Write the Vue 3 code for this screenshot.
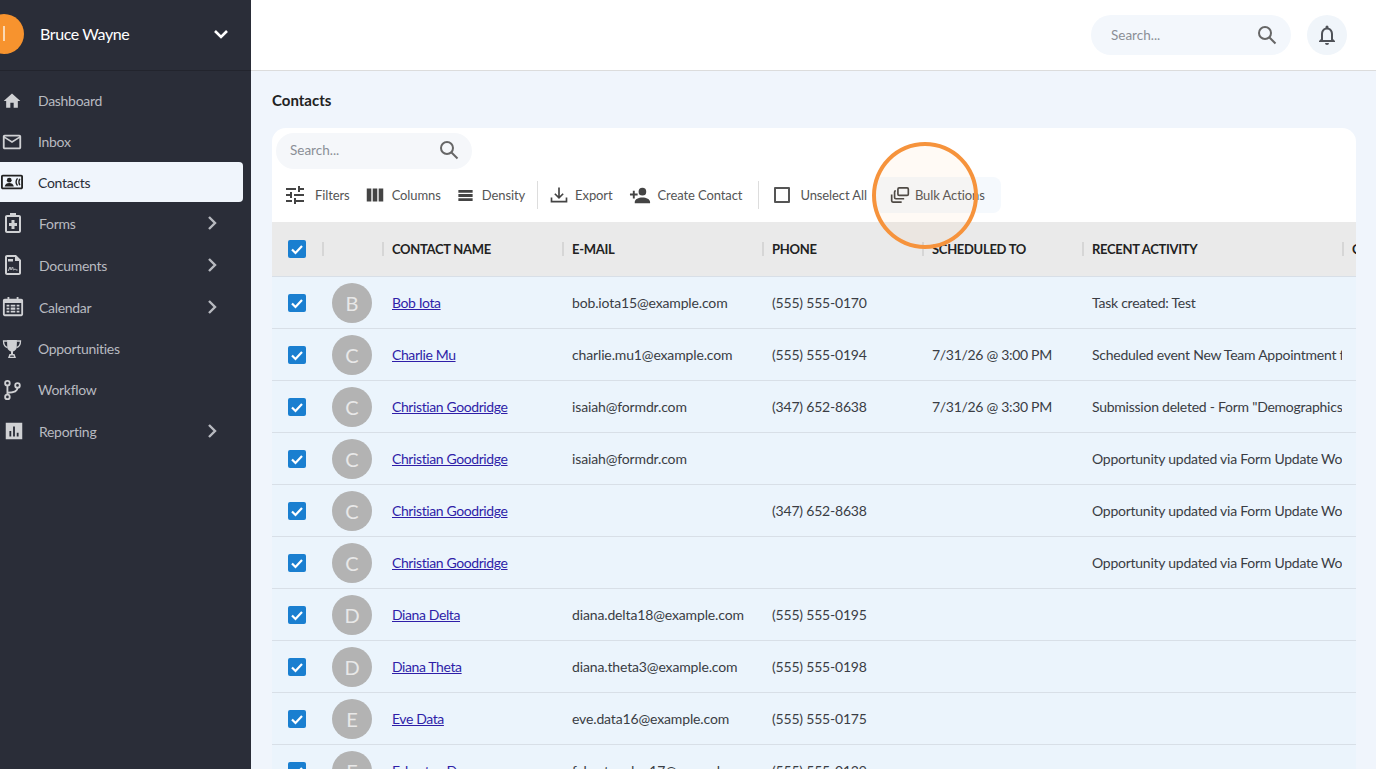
<script setup>
const menu = [
  { label: 'Dashboard', icon: 'home' },
  { label: 'Inbox', icon: 'mail' },
  { label: 'Contacts', icon: 'contacts', active: true },
  { label: 'Forms', icon: 'forms', sub: true },
  { label: 'Documents', icon: 'docs', sub: true },
  { label: 'Calendar', icon: 'calendar', sub: true },
  { label: 'Opportunities', icon: 'trophy' },
  { label: 'Workflow', icon: 'flow' },
  { label: 'Reporting', icon: 'chart', sub: true },
];

const contacts = [
  { name: 'Bob Iota', email: 'bob.iota15@example.com', phone: '(555) 555-0170', when: '', activity: 'Task created: Test' },
  { name: 'Charlie Mu', email: 'charlie.mu1@example.com', phone: '(555) 555-0194', when: '7/31/26 @ 3:00 PM', activity: 'Scheduled event New Team Appointment for Charlie' },
  { name: 'Christian Goodridge', email: 'isaiah@formdr.com', phone: '(347) 652-8638', when: '7/31/26 @ 3:30 PM', activity: 'Submission deleted - Form "Demographics" removed' },
  { name: 'Christian Goodridge', email: 'isaiah@formdr.com', phone: '', when: '', activity: 'Opportunity updated via Form Update Workflow' },
  { name: 'Christian Goodridge', email: '', phone: '(347) 652-8638', when: '', activity: 'Opportunity updated via Form Update Workflow' },
  { name: 'Christian Goodridge', email: '', phone: '', when: '', activity: 'Opportunity updated via Form Update Workflow' },
  { name: 'Diana Delta', email: 'diana.delta18@example.com', phone: '(555) 555-0195', when: '', activity: '' },
  { name: 'Diana Theta', email: 'diana.theta3@example.com', phone: '(555) 555-0198', when: '', activity: '' },
  { name: 'Eve Data', email: 'eve.data16@example.com', phone: '(555) 555-0175', when: '', activity: '' },
  { name: 'Fabastan Doe', email: 'fabastan.doe17@example.com', phone: '(555) 555-0139', when: '', activity: '' },
];

const columns = ['Contact Name', 'E-mail', 'Phone', 'Scheduled To', 'Recent Activity', 'Created'];
</script>

<template>
  <div class="page">
    <aside class="sidebar">
      <div class="user">
        <span class="avatar-main"><i></i></span>
        <span class="user-name">Bruce Wayne</span>
        <svg class="user-caret" viewBox="0 0 24 24" width="24" height="24"><path d="M6 9l6 6 6-6" fill="none" stroke="#fff" stroke-width="2.6" /></svg>
      </div>
      <nav class="menu">
        <a v-for="m in menu" :key="m.label" class="item" :class="{ active: m.active, sub: m.sub }">
          <span class="item-icon">
            <svg v-if="m.icon === 'home'" viewBox="0 0 24 24" width="20" height="20"><path d="M10 20v-6h4v6h5v-8h3L12 3 2 12h3v8z" fill="currentColor" /></svg>
            <svg v-else-if="m.icon === 'mail'" viewBox="0 0 24 24" width="22" height="22"><path d="M22 6c0-1.100-.9-2-2-2H4c-1.100 0-2 .9-2 2v12c0 1.100.9 2 2 2h16c1.100 0 2-.9 2-2V6zm-2 0l-8 5-8-5h16zm0 12H4V8l8 5 8-5v10z" fill="currentColor" /></svg>
            <svg v-else-if="m.icon === 'contacts'" viewBox="0 0 24 24" width="22" height="22"><path d="M22 4H2C.9 4 0 4.900 0 6v12c0 1.100.9 2 2 2h20c1.100 0 2-.9 2-2V6c0-1.100-.9-2-2-2zm0 14H2V6h20v12z" fill="currentColor" /><circle cx="9" cy="10" r="2.600" fill="currentColor" /><path d="M4 17c.4-2.600 2.600-3.800 5-3.800s4.600 1.200 5 3.800z" fill="currentColor" /><path d="M18 8c-1.800 2.300-1.800 5.700 0 8M20.500 8.500c-1.100 2-1.100 5 0 7" fill="none" stroke="currentColor" stroke-width="1.500" /></svg>
            <svg v-else-if="m.icon === 'forms'" viewBox="0 0 24 24" width="24" height="24"><path d="M9 2h6v2h3c1.100 0 2 .9 2 2v14c0 1.100-.9 2-2 2H6c-1.100 0-2-.9-2-2V6c0-1.100.9-2 2-2h3V2zM6 6v14h12V6H6zm4.500 3h3v3H16v3h-2.500v3h-3v-3H8v-3h2.500V9z" fill="currentColor" fill-rule="evenodd" /></svg>
            <svg v-else-if="m.icon === 'docs'" viewBox="0 0 24 24" width="24" height="24"><path d="M6 2h9l5 5v13c0 1.100-.9 2-2 2H6c-1.100 0-2-.9-2-2V4c0-1.100.9-2 2-2zm0 2v16h12V8h-4V4H6z" fill="currentColor" fill-rule="evenodd" /><path d="M7 18c1-.5 1.500-4 2-4s.5 3 1 3 1-3 1.500-3 .5 3 1 3 1-1 1.500-1 .5 1 2.500 1" fill="none" stroke="currentColor" stroke-width="1" /><rect x="7" y="6" width="5" height="2.500" fill="currentColor" /></svg>
            <svg v-else-if="m.icon === 'calendar'" viewBox="0 0 24 24" width="22" height="22"><path d="M3 3h3V1h2v2h8V1h2v2h3c1.100 0 2 .9 2 2v15c0 1.100-.9 2-2 2H3c-1.100 0-2-.9-2-2V5c0-1.100.9-2 2-2zM3 7.500V20h18V7.500z" fill="currentColor" fill-rule="evenodd" /><path d="M5 9.500h3v2H5zM5 12.800h3v1.900H5zM5 16h3v2H5zM16 9.500h3v2h-3zM16 12.800h3v1.900h-3zM16 16h3v2h-3zM9.500 9.500h5v2h-5zM9.500 12.500h5v2.500h-5zM9.500 16h5v2h-5z" fill="currentColor" /></svg>
            <svg v-else-if="m.icon === 'trophy'" viewBox="0 0 24 24" width="24" height="24"><path d="M7 3h10l-.3 7.500c-.2 2-2 3.500-3.700 4V17h-2v-2.500c-1.700-.5-3.500-2-3.700-4z" fill="currentColor" /><path d="M7 4H3.500c0 3.500 1.500 5.800 4 6.500M17 4h3.500c0 3.500-1.500 5.800-4 6.500" fill="none" stroke="currentColor" stroke-width="1.300" /><path d="M9.500 17h5l1.500 4H8zM10.500 18.500l-.5 1.200h4l-.5-1.200z" fill="currentColor" fill-rule="evenodd" /></svg>
            <svg v-else-if="m.icon === 'flow'" viewBox="0 0 24 24" width="22" height="22"><circle cx="7" cy="4.500" r="2.500" fill="none" stroke="currentColor" stroke-width="2" /><circle cx="7" cy="19.500" r="2.500" fill="none" stroke="currentColor" stroke-width="2" /><circle cx="18" cy="7" r="2.500" fill="none" stroke="currentColor" stroke-width="2" /><path d="M7 7v10M7 15c5 0 11-1 11-5.500" fill="none" stroke="currentColor" stroke-width="2" /></svg>
            <svg v-else viewBox="0 0 24 24" width="24" height="24" class="chart"><path d="M3 3h18v18H3zM7 12v6h2v-6zM11 7v11h2V7zM15 14v4h2v-4z" fill="currentColor" fill-rule="evenodd" /></svg>
          </span>
          <span class="item-label">{{ m.label }}</span>
          <svg v-if="m.sub" class="item-arrow" viewBox="0 0 24 24" width="24" height="24"><path d="M9 6l6 6-6 6" fill="none" stroke="currentColor" stroke-width="2.400" /></svg>
        </a>
      </nav>
    </aside>

    <div class="content">
      <header class="topbar">
        <div class="search top-search">
          <span>Search...</span>
          <svg viewBox="0 0 24 24" width="24" height="24"><circle cx="10" cy="10" r="6" fill="none" stroke="#666" stroke-width="2" /><path d="M14.500 14.500L20.500 20.500" stroke="#666" stroke-width="2" /></svg>
        </div>
        <button class="bell">
          <svg viewBox="0 0 24 24" width="24" height="24"><path d="M12 2.500a1.500 1.500 0 0 1 1.500 1.500v.7C16.300 5.400 18 7.900 18 11v5l2 2v1H4v-1l2-2v-5c0-3.100 1.700-5.600 4.500-6.300V4A1.500 1.500 0 0 1 12 2.500zM8 17h8v-6c0-2.500-1.500-4.500-4-4.500S8 8.500 8 11zM10 20h4a2 2 0 0 1-4 0z" fill="#4f5258" fill-rule="evenodd" /></svg>
        </button>
      </header>

      <main class="main">
        <h1 class="title">Contacts</h1>
        <section class="card">
          <div class="search card-search">
            <span>Search...</span>
            <svg viewBox="0 0 24 24" width="24" height="24"><circle cx="10" cy="10" r="6" fill="none" stroke="#666" stroke-width="2" /><path d="M14.500 14.500L20.500 20.500" stroke="#666" stroke-width="2" /></svg>
          </div>
          <div class="toolbar">
            <button class="tool filters">
              <svg viewBox="0 0 24 24" width="24" height="24"><path d="M3 17v2h6v-2H3zM3 5v2h10V5H3zm10 16v-2h8v-2h-8v-2h-2v6h2zM7 9v2H3v2h4v2h2V9H7zm14 4v-2H11v2h10zm-6-4h2V7h4V5h-4V3h-2v6z" fill="#444" /></svg>
              Filters
            </button>
            <button class="tool columns">
              <svg viewBox="0 0 24 24" width="22" height="22"><path d="M3 5h5v14H3zM9.500 5h5v14h-5zM16 5h5v14h-5z" fill="#444" /></svg>
              Columns
            </button>
            <button class="tool density">
              <svg viewBox="0 0 24 24" width="19" height="19"><path d="M3 5h18v3.500H3zM3 10.200h18v3.600H3zM3 15.500h18V19H3z" fill="#444" /></svg>
              Density
            </button>
            <span class="divider first"></span>
            <button class="tool export">
              <svg viewBox="0 0 24 24" width="20" height="20"><path d="M12 3v12M7 10.500l5 5 5-5M3 15v5h18v-5" fill="none" stroke="#444" stroke-width="2" /></svg>
              Export
            </button>
            <button class="tool create">
              <svg viewBox="0 0 24 24" width="23" height="23"><circle cx="14" cy="8" r="4" fill="#444" /><path d="M6 19c0-3.500 4-5 8-5s8 1.500 8 5v1H6zM4 7v3H1v2h3v3h2v-3h3v-2H6V7z" fill="#444" /></svg>
              Create Contact
            </button>
            <span class="divider second"></span>
            <button class="tool unselect">
              <span class="box"></span>
              Unselect All
            </button>
            <button class="tool bulk">
              <svg viewBox="0 0 24 24" width="20" height="20"><rect x="9.500" y="3.500" width="12.500" height="9" rx="1.500" fill="none" stroke="#444" stroke-width="2" /><path d="M6.500 7H7M6.500 7A1.500 1.500 0 0 0 5.500 8.500V15a1.500 1.500 0 0 0 1.500 1.500h10" fill="none" stroke="#444" stroke-width="2" /><path d="M2 11.500V19a1.500 1.500 0 0 0 1.500 1.500H14" fill="none" stroke="#444" stroke-width="2" /></svg>
              Bulk Actions
            </button>
          </div>

          <div class="table">
            <div class="row head">
              <div class="cell cell-check"><span class="check"><svg viewBox="0 0 18 18"><path d="M4 9.500l3.500 3.500L14 6" fill="none" stroke="#fff" stroke-width="2.200" /></svg></span></div>
              <div class="cell cell-avatar"></div>
              <div v-for="c in columns" :key="c" class="cell" :class="'col-' + columns.indexOf(c)">{{ c }}</div>
            </div>
            <div v-for="(c, i) in contacts" :key="i" class="row">
              <div class="cell cell-check"><span class="check"><svg viewBox="0 0 18 18"><path d="M4 9.500l3.500 3.500L14 6" fill="none" stroke="#fff" stroke-width="2.200" /></svg></span></div>
              <div class="cell cell-avatar"><span class="avatar">{{ c.name[0] }}</span></div>
              <div class="cell col-0"><a class="link">{{ c.name }}</a></div>
              <div class="cell col-1">{{ c.email }}</div>
              <div class="cell col-2">{{ c.phone }}</div>
              <div class="cell col-3">{{ c.when }}</div>
              <div class="cell col-4">{{ c.activity }}</div>
              <div class="cell col-5"></div>
            </div>
          </div>
        </section>
      </main>
    </div>

    <div class="spotlight"></div>
  </div>
</template>

<style>
html, body { margin: 0; overflow: hidden; }
</style>

<style scoped>
.page {
  position: relative;
  display: flex;
  width: 1376px;
  height: 769px;
  overflow: hidden;
  font-family: Lato, "Noto Sans", sans-serif;
  font-size: 14px;
  color: #3a3d44;
}

.sidebar {
  flex: 0 0 251px;
  background: #2a2d38;
  overflow: hidden;
}

.user {
  display: flex;
  align-items: center;
  box-sizing: border-box;
  height: 71px;
  padding-bottom: 3px;
  border-bottom: 1px solid #22242d;
  color: #fff;
}

.avatar-main {
  display: flex;
  align-items: center;
  justify-content: center;
  flex: none;
  width: 40px;
  height: 40px;
  margin-left: -16px;
  border-radius: 50%;
  background: #f7932e;
}

.avatar-main i {
  width: 2px;
  height: 15px;
  background: #fbd9b3;
}

.user-name {
  margin-left: 16px;
  font-size: 16px;
  letter-spacing: -0.4px;
}

.user-caret {
  margin-left: auto;
  margin-right: 18px;
}

.menu {
  display: flex;
  flex-direction: column;
  padding-top: 9px;
}

.item {
  display: flex;
  align-items: center;
  height: 41px;
  padding-left: 38px;
  position: relative;
  color: #b8bac0;
  letter-spacing: -0.3px;
}

.item.sub {
  height: 42px;
  padding-left: 39px;
}

.item-icon {
  position: absolute;
  left: 0;
  width: 24px;
  display: flex;
  align-items: center;
  justify-content: center;
  color: #d0d1d4;
}

.item.sub .item-icon {
  left: 1px;
}

.chart {
  margin-left: 2px;
}

.item.active {
  width: 243px;
  height: 40px;
  box-sizing: border-box;
  border-radius: 0 4px 4px 0;
  background: #f0f5fc;
  color: #2a2d38;
}

.item.active .item-icon {
  color: #222;
}

.item-arrow {
  margin-left: auto;
  margin-right: 27px;
}

.content {
  flex: 1;
  display: flex;
  flex-direction: column;
  min-width: 0;
  background: #f0f5fc;
}

.topbar {
  display: flex;
  align-items: center;
  justify-content: flex-end;
  gap: 16px;
  box-sizing: border-box;
  height: 71px;
  padding-right: 29px;
  background: #fff;
  border-bottom: 1px solid #dcdcdc;
}

.search {
  display: flex;
  align-items: center;
  justify-content: space-between;
  box-sizing: border-box;
  color: #8b8f96;
  background: #f3f7fc;
  font-size: 13.5px;
}

.top-search {
  width: 200px;
  height: 40px;
  padding: 0 12px 0 20px;
  border-radius: 20px;
}

.bell {
  display: flex;
  align-items: center;
  justify-content: center;
  width: 40px;
  height: 40px;
  padding: 0;
  border: none;
  border-radius: 50%;
  background: #f0f5fa;
}

.main {
  flex: 1;
  padding: 0 20px 0 21px;
  min-height: 0;
}

.title {
  margin: 0;
  padding: 19px 0 18px;
  font-size: 15px;
  line-height: 20px;
  font-weight: 700;
  color: #222;
}

.card {
  background: #fff;
  border-radius: 14px 14px 0 0;
  overflow: hidden;
}

.card-search {
  width: 196px;
  height: 36px;
  margin: 5px 0 0 4px;
  padding: 0 11px 2px 14px;
  border-radius: 18px;
  background: #f5f7fa;
}

.toolbar {
  display: flex;
  align-items: center;
  height: 44px;
  margin-top: 4px;
  padding: 0 0 5px;
  color: #555;
  font-size: 13px;
  letter-spacing: -0.1px;
}

.tool {
  display: flex;
  align-items: center;
  height: 36px;
  padding: 0;
  border: none;
  background: none;
  color: inherit;
  font: inherit;
  letter-spacing: inherit;
  white-space: nowrap;
}

.filters { margin-left: 11px; gap: 8px; }
.columns { margin-left: 14px; gap: 6px; }
.density { margin-left: 15px; gap: 7px; }
.export { margin-left: 11px; gap: 6px; }
.create { margin-left: 16px; gap: 6px; }
.unselect { margin-left: 15px; gap: 10px; }
.bulk {
  gap: 5px;
  margin-left: 7px;
  padding: 0 16px;
  border-radius: 8px;
  background: #f5f9fd;
}

.box {
  width: 12px;
  height: 12px;
  border: 2px solid #555;
  border-radius: 1px;
}

.divider {
  width: 1px;
  height: 28px;
  background: #ddd;
}

.divider.first { margin-left: 12px; }
.divider.second { margin-left: 16px; }

.row {
  display: flex;
  align-items: center;
  height: 52px;
  box-sizing: border-box;
  background: #ebf4fc;
  border-bottom: 1px solid #d8dfe7;
}

.row.head {
  height: 55px;
  background: #eaeaea;
  font-weight: 700;
  font-size: 13px;
  color: #222;
  text-transform: uppercase;
  letter-spacing: -0.3px;
}

.head .cell {
  height: 20px;
  line-height: 20px;
}

.cell {
  position: relative;
  flex: none;
  box-sizing: border-box;
  padding-left: 10px;
  overflow: hidden;
  white-space: nowrap;
}

.head .cell::before {
  content: "";
  position: absolute;
  left: 0;
  top: 50%;
  width: 2px;
  height: 14px;
  margin-top: -7px;
  background: #d6d6d6;
}

.head .cell-check::before {
  display: none;
}

.cell-check {
  width: 50px;
  padding-left: 16px;
  display: flex;
}

.head .cell-check {
  height: 18px;
}

.cell-avatar {
  width: 60px;
  display: flex;
}

.col-0 { width: 180px; }
.col-1 { width: 200px; letter-spacing: -0.14px; }
.col-2 { width: 160px; letter-spacing: -0.2px; }
.col-3 { width: 160px; letter-spacing: -0.3px; }
.col-4 { width: 260px; letter-spacing: -0.25px; }
.col-5 { width: 14px; }

.head .cell {
  letter-spacing: -0.3px;
}

.check {
  display: block;
  width: 18px;
  height: 18px;
  border-radius: 2px;
  background: #1a7fd0;
}

.check svg {
  display: block;
}

.avatar {
  display: flex;
  align-items: center;
  justify-content: center;
  width: 40px;
  height: 40px;
  border-radius: 50%;
  background: #b3b3b3;
  color: #e8e8e8;
  font-size: 20px;
}

.link {
  color: #2f1ea8;
  text-decoration: underline;
  letter-spacing: -0.4px;
}

.spotlight {
  position: absolute;
  left: 872px;
  top: 142px;
  box-sizing: border-box;
  width: 106px;
  height: 107px;
  border: 4px solid #f6933c;
  border-radius: 50%;
  background: rgba(255, 170, 90, 0.06);
}
</style>
